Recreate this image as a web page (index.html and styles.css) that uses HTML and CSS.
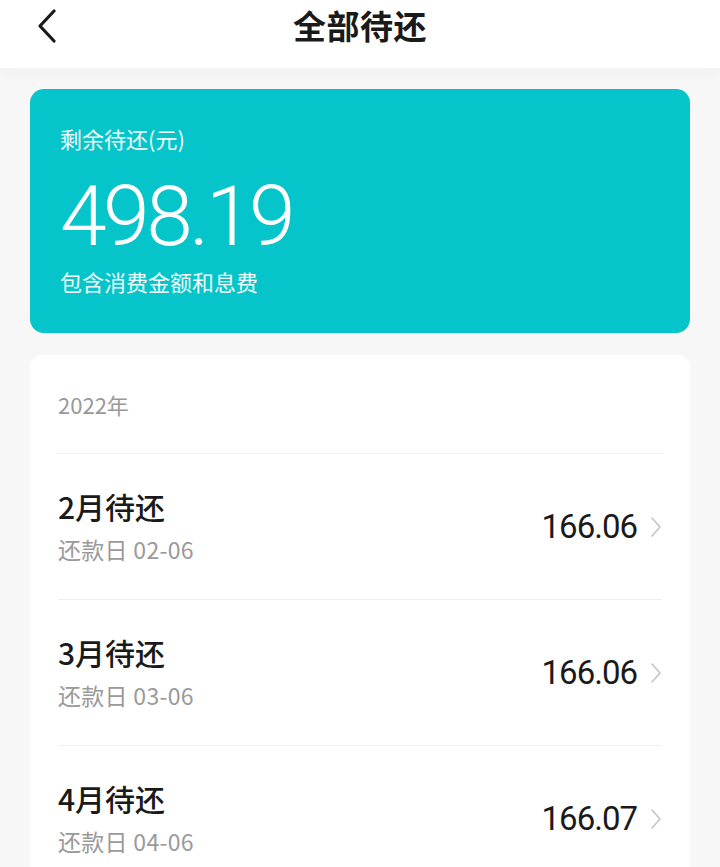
FILE: index.html
```html
<!DOCTYPE html>
<html lang="zh-CN">
<head>
<meta charset="utf-8">
<title>全部待还</title>
<link rel="stylesheet" href="styles.css">
</head>
<body>
<header class="topbar">
  <span class="back">
    <svg width="22" height="34" viewBox="0 0 22 34"><path d="M18 2 L4 17 L18 32" fill="none" stroke="#1a1a1a" stroke-width="3.2" stroke-linecap="round" stroke-linejoin="round"/></svg>
  </span>
  <h1 class="title">全部待还</h1>
</header>
<main class="content">
  <section class="summary">
    <div class="summary-label">剩余待还(元)</div>
    <div class="summary-amount">498.19</div>
    <div class="summary-note">包含消费金额和息费</div>
  </section>
  <section class="list">
    <div class="year">2022年</div>
    <div class="row">
      <div class="row-main">
        <div class="row-title">2月待还</div>
        <div class="row-sub">还款日 02-06</div>
      </div>
      <div class="row-amount">166.06</div>
      <svg class="chev" width="12" height="22" viewBox="0 0 12 22"><path d="M2 2 L10 11 L2 20" fill="none" stroke="#c4c4c4" stroke-width="1.6" stroke-linecap="round" stroke-linejoin="round"/></svg>
    </div>
    <div class="row">
      <div class="row-main">
        <div class="row-title">3月待还</div>
        <div class="row-sub">还款日 03-06</div>
      </div>
      <div class="row-amount">166.06</div>
      <svg class="chev" width="12" height="22" viewBox="0 0 12 22"><path d="M2 2 L10 11 L2 20" fill="none" stroke="#c4c4c4" stroke-width="1.6" stroke-linecap="round" stroke-linejoin="round"/></svg>
    </div>
    <div class="row">
      <div class="row-main">
        <div class="row-title">4月待还</div>
        <div class="row-sub">还款日 04-06</div>
      </div>
      <div class="row-amount">166.07</div>
      <svg class="chev" width="12" height="22" viewBox="0 0 12 22"><path d="M2 2 L10 11 L2 20" fill="none" stroke="#c4c4c4" stroke-width="1.6" stroke-linecap="round" stroke-linejoin="round"/></svg>
    </div>
  </section>
</main>
</body>
</html>
```
FILE: styles.css
```css
html, body {
  margin: 0;
  padding: 0;
}
body {
  background: #f7f7f7;
  font-family: "Noto Sans CJK SC", "Noto Sans", sans-serif;
  width: 720px;
  height: 867px;
  overflow: hidden;
}
.topbar {
  height: 68px;
  background: #ffffff;
  display: flex;
  align-items: center;
  justify-content: center;
  position: relative;
  box-shadow: 0 6px 14px rgba(0,0,0,0.025);
}
.back {
  position: absolute;
  left: 36px;
  top: 9px;
  display: flex;
}
.title {
  margin: 0;
  margin-top: -18px;
  font-size: 33px;
  font-weight: 700;
  color: #1a1a1a;
  letter-spacing: 0.5px;
}
.content {
  padding: 21px 30px 0 30px;
  display: flex;
  flex-direction: column;
  gap: 22px;
}
.summary {
  background: #06c5ca;
  border-radius: 14px;
  height: 244px;
  box-sizing: border-box;
  padding: 34px 30px 0 30px;
  color: #ffffff;
}
.summary-label {
  font-size: 22px;
  line-height: 30px;
  opacity: 0.95;
}
.summary-amount {
  font-family: Roboto, "Noto Sans", sans-serif;
  font-weight: 300;
  font-size: 84px;
  line-height: 90px;
  margin-top: 19px;
  letter-spacing: -3.5px;
}
.summary-note {
  font-size: 22px;
  line-height: 30px;
  margin-top: 4px;
  opacity: 0.95;
}
.list {
  background: #ffffff;
  border-radius: 12px;
  padding: 0 28px;
}
.year {
  height: 98px;
  display: flex;
  align-items: center;
  font-size: 22px;
  color: #999999;
  border-bottom: 1px solid #f0f0f0;
}
.row {
  height: 145px;
  display: flex;
  align-items: center;
  border-bottom: 1px solid #f0f0f0;
}
.row-main {
  flex: 1;
  display: flex;
  flex-direction: column;
  gap: 8px;
  margin-top: -4px;
}
.row-title {
  font-size: 30px;
  line-height: 40px;
  font-weight: 500;
  color: #1a1a1a;
}
.row-sub {
  font-size: 23px;
  line-height: 30px;
  color: #9a9a9a;
  letter-spacing: 0.3px;
}
.row-amount {
  font-family: Roboto, "Noto Sans", sans-serif;
  font-size: 33px;
  color: #1a1a1a;
  letter-spacing: -1px;
  margin-right: 13px;
}
.chev {
  display: block;
}
```
